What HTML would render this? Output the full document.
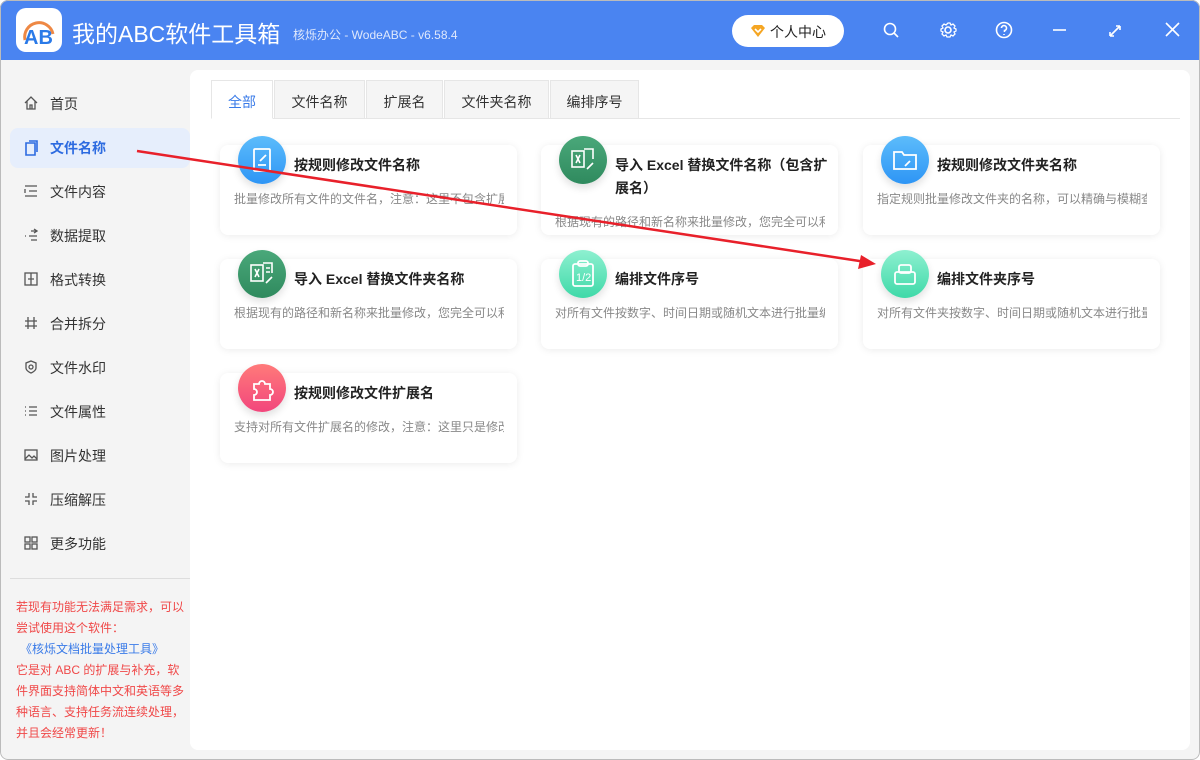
<!DOCTYPE html>
<html><head><meta charset="utf-8"><style>
*{margin:0;padding:0;box-sizing:border-box}
body{width:1200px;height:760px;overflow:hidden;background:#fff;font-family:"Liberation Sans","Noto Sans CJK SC",sans-serif;position:relative}
.win{position:absolute;left:0;top:0;width:1200px;height:760px;background:#f4f4f4;border-radius:8px;overflow:hidden}
.frame{position:absolute;left:0;top:0;width:1200px;height:760px;border:1px solid #bbb;border-radius:8px;pointer-events:none}
.top{position:absolute;left:0;top:0;width:1200px;height:60px;background:#4a84f1}
.logo{position:absolute;left:16px;top:8px;width:46px;height:44px;background:#fff;border-radius:10px}
.title{position:absolute;left:72px;top:15px;color:#fff;font-size:23px}
.ver{position:absolute;left:293px;top:26px;color:#dfe8fc;font-size:12px}
.pc{position:absolute;left:732px;top:15px;width:112px;height:32px;background:#fff;border-radius:16px;font-size:14px;color:#222;padding:7px 0 0 38px}
.side .it{position:absolute;left:10px;width:180px;height:40px;font-size:14px;color:#333;padding:10px 0 0 40px}
.side .it.a{background:#e6eefc;border-radius:8px;color:#2d6be0;font-weight:bold}
.side svg{position:absolute;left:14px;top:12px}
.main{position:absolute;left:190px;top:70px;width:1000px;height:680px;background:#fff;border-radius:8px}
.tab{position:absolute;top:80px;height:39px;background:#f5f5f5;border:1px solid #e6e6e6;font-size:14px;color:#333;text-align:center;padding-top:11px}
.tab.a{background:#fff;color:#3a7be8;border-bottom-color:#fff}
.card{position:absolute;width:297px;height:90px;background:#fff;border-radius:8px;box-shadow:0 1px 8px rgba(0,0,0,.08)}
.card .ic{position:absolute;left:18px;top:-9px;width:48px;height:48px;border-radius:50%;box-shadow:0 4px 8px rgba(0,0,0,.12)}
.card .t{position:absolute;left:74px;top:9px;font-size:14px;font-weight:bold;color:#222;width:215px;line-height:23px}
.card .d{position:absolute;left:14px;top:45px;font-size:12px;color:#888;width:270px;white-space:nowrap;overflow:hidden}
.note{position:absolute;left:16px;top:597px;width:172px;font-size:12px;line-height:21px;color:#f04848}
</style></head><body><div class="win">
<div class="top">
<div class="logo"><svg width="46" height="44"><path d="M9 32 A14 14 0 0 1 37 26" stroke="#e84" stroke-width="3" fill="none"/><text x="8" y="36" font-size="20" font-weight="bold" fill="#2a7ae8" font-family="Liberation Sans">AB</text></svg></div>
<div class="title">我的ABC软件工具箱</div>
<div class="ver">核烁办公 - WodeABC - v6.58.4</div>
<div class="pc"><svg style="position:absolute;left:18px;top:9px" width="16" height="14"><path d="M1 4 4 1h8l3 3-7 9z" fill="#f5a623"/><path d="M5 5l3 3 3-3" stroke="#fff" stroke-width="1.6" fill="none"/></svg>个人中心</div>
<svg style="position:absolute;left:880px;top:20px" width="200" height="22" fill="none" stroke="#fff" stroke-width="1.6"><circle cx="10" cy="9" r="5.5"/><path d="M14 13l4 4"/><circle cx="68" cy="10" r="3"/><path d="M68 3l2 0 1 2 2-1 2 2-1 2 2 1v2l-2 1 1 2-2 2-2-1-1 2h-3l-1-2-2 1-2-2 1-2-2-1v-2l2-1-1-2 2-2 2 1z" stroke-width="1.3"/><circle cx="124" cy="10" r="7.5"/><path d="M121.5 8a2.5 2.5 0 1 1 3 2.5v1.5M124 14v1"/></svg>
<svg style="position:absolute;left:1050px;top:20px" width="140" height="22" fill="none" stroke="#fff" stroke-width="1.6"><path d="M3 10h13"/><path d="M60 16l10-10M60 16h4M60 16v-4M70 6h-4M70 6v4"/><path d="M116 3l13 13M129 3l-13 13"/></svg>
</div>
<div class="side">
<div class="it" style="top:84px"><svg width="14" height="14" fill="none" stroke="#555" stroke-width="1.3"><path d="M1 7 7 1l6 6M3 5v8h8V5M6 13v-4h2v4"/></svg>首页</div>
<div class="it a" style="top:128px"><svg width="14" height="16" fill="none" stroke="#2d6be0" stroke-width="1.6"><path d="M2 3h9v12H2zM5 1h8v11"/></svg>文件名称</div>
<div class="it" style="top:172px"><svg width="14" height="14" fill="none" stroke="#555" stroke-width="1.3"><path d="M1 2h12M5 7h8M1 12h12M1 5v4"/></svg>文件内容</div>
<div class="it" style="top:216px"><svg width="14" height="14" fill="none" stroke="#555" stroke-width="1.3"><path d="M1 8h1M5 8h8M7 3h6M7 12h6M10 1l3 2-3 2"/></svg>数据提取</div>
<div class="it" style="top:260px"><svg width="14" height="14" fill="none" stroke="#555" stroke-width="1.3"><rect x="1" y="1" width="12" height="12"/><path d="M7 1v12M4 7h6"/></svg>格式转换</div>
<div class="it" style="top:304px"><svg width="14" height="14" fill="none" stroke="#555" stroke-width="1.3"><path d="M4 1v12M10 1v12M1 5h12M1 10h12"/></svg>合并拆分</div>
<div class="it" style="top:348px"><svg width="14" height="14" fill="none" stroke="#555" stroke-width="1.3"><path d="M7 1l5 2v5c0 3-5 5-5 5s-5-2-5-5V3z"/><circle cx="7" cy="7" r="2"/></svg>文件水印</div>
<div class="it" style="top:392px"><svg width="14" height="14" fill="none" stroke="#555" stroke-width="1.3"><path d="M1 3h1M5 3h8M1 7h1M5 7h8M1 11h1M5 11h8"/></svg>文件属性</div>
<div class="it" style="top:436px"><svg width="14" height="14" fill="none" stroke="#555" stroke-width="1.3"><rect x="1" y="2" width="12" height="10"/><path d="M1 11l4-4 3 3 2-2 3 3"/></svg>图片处理</div>
<div class="it" style="top:480px"><svg width="14" height="14" fill="none" stroke="#555" stroke-width="1.3"><path d="M5 1v4H1M9 1v4h4M5 13V9H1M9 13V9h4"/></svg>压缩解压</div>
<div class="it" style="top:524px"><svg width="14" height="14" fill="none" stroke="#555" stroke-width="1.3"><rect x="1" y="1" width="5" height="5"/><rect x="8" y="1" width="5" height="5"/><rect x="1" y="8" width="5" height="5"/><rect x="8" y="8" width="5" height="5"/></svg>更多功能</div>
</div>
<div style="position:absolute;left:10px;top:578px;width:180px;height:1px;background:#ddd"></div>
<div class="note">若现有功能无法满足需求，可以尝试使用这个软件：<br><span style="color:#3a7be8;padding-left:4px">《核烁文档批量处理工具》</span><br>它是对 ABC 的扩展与补充，软件界面支持简体中文和英语等多种语言、支持任务流连续处理，并且会经常更新！</div>
<div class="main"></div>
<div style="position:absolute;left:211px;top:118px;width:969px;height:1px;background:#e6e6e6"></div>
<div class="tab a" style="left:211px;width:62px">全部</div>
<div class="tab" style="left:274px;width:91px">文件名称</div>
<div class="tab" style="left:366px;width:77px">扩展名</div>
<div class="tab" style="left:444px;width:105px">文件夹名称</div>
<div class="tab" style="left:550px;width:89px">编排序号</div>

<div class="card" style="left:220px;top:145px"><div class="ic" style="background:linear-gradient(#5cbcfb,#2e95f5)"><svg width="48" height="48" fill="none" stroke="#fff" stroke-width="1.8"><rect x="16" y="13" width="16" height="22" rx="1"/><path d="M20 29h8M22 25l6-6"/></svg></div><div class="t">按规则修改文件名称</div><div class="d">批量修改所有文件的文件名，注意：这里不包含扩展名</div></div>
<div class="card" style="left:541px;top:145px"><div class="ic" style="background:linear-gradient(#4aa87a,#2f8a5e)"><svg width="48" height="48" fill="none" stroke="#fff" stroke-width="1.6"><rect x="13" y="15" width="12" height="16"/><path d="M17 19l4 8M21 19l-4 8M25 13h9v10M28 33l6-6"/></svg></div><div class="t">导入 Excel 替换文件名称（包含扩展名）</div><div class="d" style="top:68px">根据现有的路径和新名称来批量修改，您完全可以利用</div></div>
<div class="card" style="left:863px;top:145px"><div class="ic" style="background:linear-gradient(#5cbcfb,#2e95f5)"><svg width="48" height="48" fill="none" stroke="#fff" stroke-width="1.8"><path d="M13 16h8l2 3h12v14H13zM24 30l5-5"/></svg></div><div class="t">按规则修改文件夹名称</div><div class="d">指定规则批量修改文件夹的名称，可以精确与模糊查找</div></div>

<div class="card" style="left:220px;top:259px"><div class="ic" style="background:linear-gradient(#4aa87a,#2f8a5e)"><svg width="48" height="48" fill="none" stroke="#fff" stroke-width="1.6"><rect x="13" y="15" width="12" height="16"/><path d="M17 19l4 8M21 19l-4 8M25 13h9v10M28 18h4M28 22h4M28 33l6-6"/></svg></div><div class="t">导入 Excel 替换文件夹名称</div><div class="d">根据现有的路径和新名称来批量修改，您完全可以利用</div></div>
<div class="card" style="left:541px;top:259px"><div class="ic" style="background:linear-gradient(#8ef0d0,#3fd9a8)"><svg width="48" height="48" fill="none" stroke="#fff" stroke-width="1.8"><rect x="14" y="14" width="20" height="22" rx="2"/><rect x="19" y="11" width="10" height="5" rx="2"/><text x="17" y="31" font-size="11" fill="#fff" stroke="none" font-family="Liberation Sans">1/2</text></svg></div><div class="t">编排文件序号</div><div class="d">对所有文件按数字、时间日期或随机文本进行批量编号</div></div>
<div class="card" style="left:863px;top:259px"><div class="ic" style="background:linear-gradient(#8ef0d0,#3fd9a8)"><svg width="48" height="48" fill="none" stroke="#fff" stroke-width="1.8"><rect x="14" y="22" width="20" height="12" rx="2"/><rect x="18" y="15" width="12" height="8" rx="2"/></svg></div><div class="t">编排文件夹序号</div><div class="d">对所有文件夹按数字、时间日期或随机文本进行批量编号</div></div>

<div class="card" style="left:220px;top:373px"><div class="ic" style="background:linear-gradient(#ff7a7a,#f2467c)"><svg width="48" height="48" fill="none" stroke="#fff" stroke-width="1.8"><path d="M16 20h5a3 3 0 1 1 6 0h5v5a3 3 0 1 1 0 6v5H16v-5a3 3 0 1 0 0-6z"/></svg></div><div class="t">按规则修改文件扩展名</div><div class="d">支持对所有文件扩展名的修改，注意：这里只是修改扩展名</div></div>

<svg style="position:absolute;left:0;top:0" width="1200" height="760"><line x1="137" y1="151" x2="866" y2="262" stroke="#e8202a" stroke-width="2.5"/><path d="M876 264 861 255 858 269z" fill="#e8202a"/></svg>
<div class="frame"></div>
</div></body></html>
